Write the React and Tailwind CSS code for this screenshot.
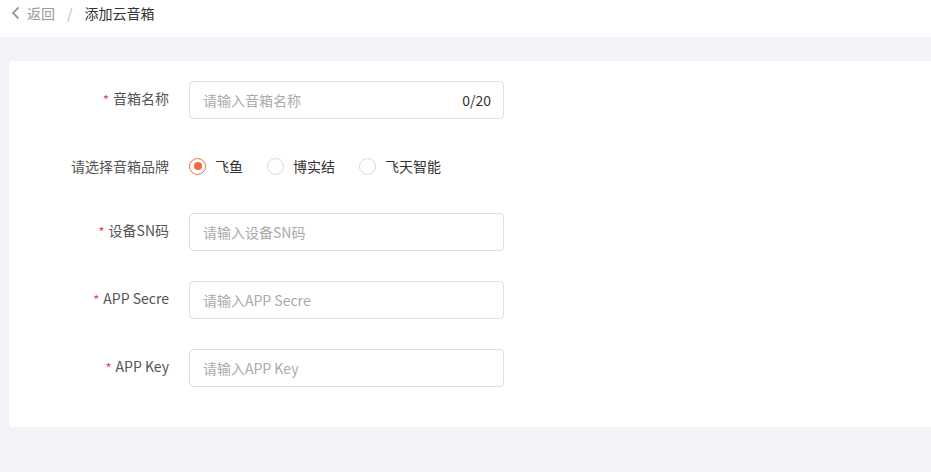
import React from 'react';

const font = { fontFamily: '"Noto Sans CJK SC", "Noto Sans", sans-serif' };

const Field = ({ label, required, children }) => (
  <div className="flex">
    <div className="w-[160px] h-[34px] shrink-0 flex items-center justify-end text-[14px] text-[#555]">
      {required && <span className="text-[#f0415a] text-[13px] mr-[4px] mt-[4px]">*</span>}
      {label}
    </div>
    <div className="ml-[20px]">{children}</div>
  </div>
);

const TextInput = ({ placeholder, suffix }) => (
  <div className="w-[315px] h-[38px] border border-[#dcdfe6] rounded-[4px] flex items-center pl-[13px] pr-[12px] text-[14px]">
    <span className="flex-1 text-[#aaa]">{placeholder}</span>
    {suffix && <span className="text-[#333]">{suffix}</span>}
  </div>
);

const Radio = ({ label, checked }) => (
  <div className="flex items-center mr-[24px]">
    <span
      className={`w-[17px] h-[17px] rounded-full border flex items-center justify-center ${checked ? 'border-[#f5693c]' : 'border-[#d9d9d9]'}`}
    >
      {checked && <span className="w-[8px] h-[8px] rounded-full bg-[#f5693c]" />}
    </span>
    <span className="ml-[9px] text-[14px] text-[#333]">{label}</span>
  </div>
);

export default function App() {
  return (
    <div className="min-h-[472px] bg-[#f2f2f7] overflow-hidden" style={font}>
      <div className="h-[37px] bg-white flex items-start pl-[10px] text-[14px]">
        <div className="flex items-center h-[26px]">
          <svg width="12" height="14" viewBox="0 0 12 14" className="mr-[5px]">
            <path d="M8.5 1.5 L3 7 L8.5 12.5" fill="none" stroke="#999" strokeWidth="1.8" />
          </svg>
          <span className="text-[#999]">返回</span>
          <span className="text-[#bbb] mx-[12px]">/</span>
          <span className="text-[#333]">添加云音箱</span>
        </div>
      </div>
      <div className="ml-[9px] mt-[24px] w-[940px] bg-white rounded-[4px] pt-[20px] pb-[40px] flex flex-col gap-[30px]">
        <Field label="音箱名称" required>
          <TextInput placeholder="请输入音箱名称" suffix="0/20" />
        </Field>
        <Field label="请选择音箱品牌">
          <div className="h-[34px] flex items-center">
            <Radio label="飞鱼" checked />
            <Radio label="博实结" />
            <Radio label="飞天智能" />
          </div>
        </Field>
        <Field label="设备SN码" required>
          <TextInput placeholder="请输入设备SN码" />
        </Field>
        <Field label="APP Secre" required>
          <TextInput placeholder="请输入APP Secre" />
        </Field>
        <Field label="APP Key" required>
          <TextInput placeholder="请输入APP Key" />
        </Field>
      </div>
    </div>
  );
}
